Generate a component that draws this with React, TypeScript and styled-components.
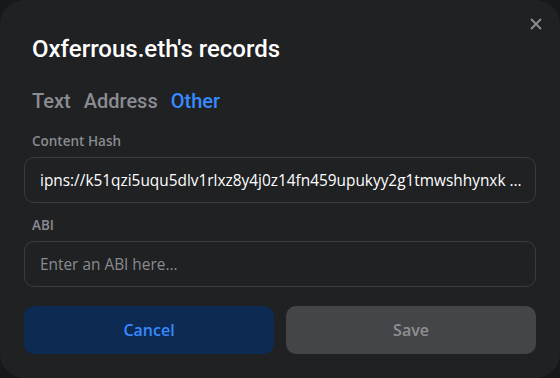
import * as React from "react";
import styled, { createGlobalStyle } from "styled-components";

const GlobalStyle = createGlobalStyle`
  html, body {
    margin: 0;
    padding: 0;
    background: #17181a;
  }
  * { box-sizing: border-box; }
`;

const tabs = ["Text", "Address", "Other"];

const App: React.FC = () => {
  return (
    <>
      <GlobalStyle />
      <Modal>
        <CloseButton aria-label="Close">
          <svg width="12" height="12" viewBox="0 0 12 12">
            <path d="M1.5 1.5 L10.5 10.5 M10.5 1.5 L1.5 10.5" stroke="#8e8f94" strokeWidth="1.8" strokeLinecap="round" />
          </svg>
        </CloseButton>
        <Title>Oxferrous.eth's records</Title>
        <TabRow>
          {tabs.map((t) => (
            <Tab key={t} active={t === "Other"}>
              {t}
            </Tab>
          ))}
        </TabRow>
        <Field>
          <Label>Content Hash</Label>
          <Input>ipns://k51qzi5uqu5dlv1rlxz8y4j0z14fn459upukyy2g1tmwshhynxk ...</Input>
        </Field>
        <Field>
          <Label>ABI</Label>
          <Input placeholder>Enter an ABI here...</Input>
        </Field>
        <Actions>
          <Button variant="cancel">Cancel</Button>
          <Button variant="save">Save</Button>
        </Actions>
      </Modal>
    </>
  );
};

export default App;

const Modal = styled.div`
  position: relative;
  width: 560px;
  height: 378px;
  background: #1f2123;
  border-radius: 24px;
  padding: 35px 24px 0;
  display: flex;
  flex-direction: column;
  font-family: Roboto, "Liberation Sans", sans-serif;
`;

const CloseButton = styled.div`
  position: absolute;
  top: 18px;
  right: 18px;
  width: 12px;
  height: 12px;
  display: flex;
`;

const Title = styled.div`
  margin: 0 8px;
  font-size: 24px;
  line-height: 28px;
  font-weight: 500;
  color: #ffffff;
`;

const TabRow = styled.div`
  display: flex;
  gap: 13px;
  margin: 26px 8px 0;
`;

const Tab = styled.div<{ active?: boolean }>`
  font-size: 20px;
  line-height: 24px;
  font-weight: 500;
  color: ${(p) => (p.active ? "#3889ff" : "#8b8c92")};
`;

const Field = styled.div`
  display: flex;
  flex-direction: column;
  gap: 7px;
  margin-top: 19px;
  & + & {
    margin-top: 13px;
  }
`;

const Label = styled.div`
  margin: 0 8px;
  font-family: "Open Sans", sans-serif;
  font-size: 13.5px;
  line-height: 18px;
  font-weight: 600;
  color: #8a8b90;
`;

const Input = styled.div<{ placeholder?: boolean }>`
  height: 46px;
  border: 1px solid #3a3c40;
  border-radius: 10px;
  padding: 0 15px;
  display: flex;
  align-items: center;
  font-family: "Open Sans", sans-serif;
  font-size: 15.4px;
  color: ${(p) => (p.placeholder ? "#8a8b90" : "#ffffff")};
  white-space: nowrap;
  overflow: hidden;
`;

const Actions = styled.div`
  display: grid;
  grid-template-columns: 1fr 1fr;
  gap: 12px;
  margin-top: 19px;
`;

const Button = styled.div<{ variant: "cancel" | "save" }>`
  height: 48px;
  border-radius: 10px;
  display: flex;
  align-items: center;
  justify-content: center;
  font-family: "Open Sans", sans-serif;
  font-size: 16px;
  font-weight: 600;
  background: ${(p) => (p.variant === "cancel" ? "#0d2a52" : "#444548")};
  color: ${(p) => (p.variant === "cancel" ? "#3889ff" : "#8e8f94")};
`;
